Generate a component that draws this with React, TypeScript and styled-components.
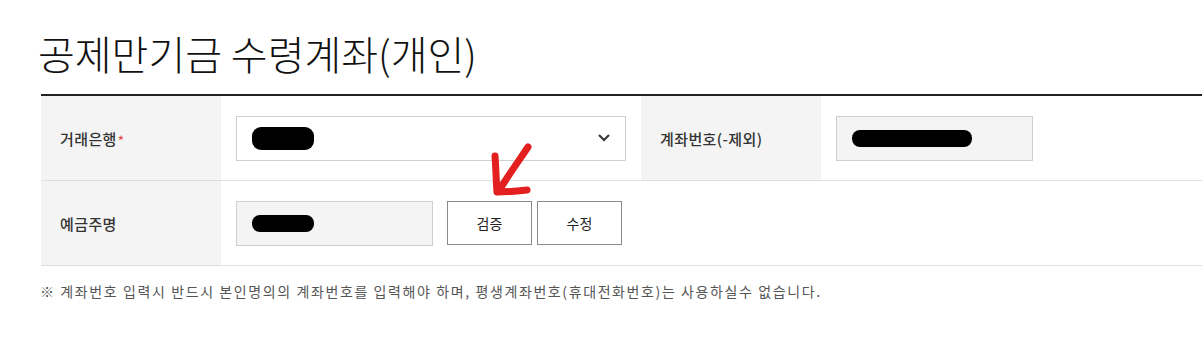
import React from "react";
import styled, { createGlobalStyle } from "styled-components";

const Global = createGlobalStyle`
  html, body { margin: 0; padding: 0; background: #fff; }
  body {
    font-family: "Noto Sans CJK KR", "Noto Sans", sans-serif;
    color: #333;
  }
  * { box-sizing: border-box; }
`;

const Page = styled.div`
  position: relative;
  width: 1202px;
  height: 339px;
  overflow: hidden;
  padding: 30px 0 0 41px;
`;

const Title = styled.h1`
  margin: 0 0 18px -3px;
  font-size: 40px;
  line-height: 46px;
  font-weight: 300;
  letter-spacing: 0;
  color: #111;
`;

const Table = styled.div`
  border-top: 2px solid #222;
  width: 1161px;
`;

const Row = styled.div<{ $cols: string }>`
  display: grid;
  grid-template-columns: ${(p) => p.$cols};
  height: 85px;
  border-bottom: 1px solid #dedede;
`;

const Label = styled.div`
  display: flex;
  align-items: center;
  padding-left: 19px;
  background: #f4f4f4;
  font-size: 15px;
  font-weight: 500;
  color: #333;
  letter-spacing: 0.4px;
`;

const Required = styled.span`
  color: #e3504a;
  font-size: 13px;
  margin-left: 1px;
  position: relative;
  top: 2px;
`;

const Value = styled.div`
  display: flex;
  align-items: center;
  padding: 0 15px;
  gap: 5px;
`;

const SelectBox = styled.div`
  position: relative;
  width: 390px;
  height: 45px;
  border: 1px solid #cfcfcf;
  background: #fff;
  display: flex;
  align-items: center;
  padding-left: 15px;
`;

const Chevron = styled.svg`
  position: absolute;
  right: 14px;
  top: 50%;
  margin-top: -5px;
`;

const ReadOnly = styled.div`
  width: 197px;
  height: 45px;
  border: 1px solid #cfcfcf;
  background: #f4f4f4;
  display: flex;
  align-items: center;
  padding-left: 15px;
`;

const Blot = styled.span<{ $w: number; $h: number; $r: number }>`
  display: inline-block;
  width: ${(p) => p.$w}px;
  height: ${(p) => p.$h}px;
  border-radius: ${(p) => p.$r}px;
  background: #000;
`;

const Button = styled.button`
  width: 85px;
  height: 44px;
  border: 1px solid #8a8a8a;
  background: #fff;
  font-family: inherit;
  font-size: 14px;
  color: #222;
  padding: 0;
  cursor: pointer;
  &:first-of-type { margin-left: 9px; }
`;

const Note = styled.p`
  margin: 15px 0 0 -1px;
  font-size: 14px;
  line-height: 20px;
  letter-spacing: 1.6px;
  color: #555;
`;

const Arrow = styled.svg`
  position: absolute;
  left: 486px;
  top: 140px;
`;

export default function App() {
  return (
    <>
      <Global />
      <Page>
        <Title>공제만기금 수령계좌(개인)</Title>
        <Table>
          <Row $cols="180px 420px 180px 1fr">
            <Label>
              거래은행<Required>*</Required>
            </Label>
            <Value>
              <SelectBox>
                <Blot $w={62} $h={23} $r={9} />
                <Chevron width="14" height="10" viewBox="0 0 14 10">
                  <polyline points="2,2 7,7 12,2" fill="none" stroke="#333" strokeWidth="2" />
                </Chevron>
              </SelectBox>
            </Value>
            <Label>계좌번호(-제외)</Label>
            <Value>
              <ReadOnly>
                <Blot $w={120} $h={17} $r={8} />
              </ReadOnly>
            </Value>
          </Row>
          <Row $cols="180px 1fr">
            <Label>예금주명</Label>
            <Value>
              <ReadOnly>
                <Blot $w={62} $h={17} $r={8} />
              </ReadOnly>
              <Button>검증</Button>
              <Button>수정</Button>
            </Value>
          </Row>
        </Table>
        <Note>
          ※ 계좌번호 입력시 반드시 본인명의의 계좌번호를 입력해야 하며, 평생계좌번호(휴대전화번호)는 사용하실수 없습니다.
        </Note>
        <Arrow width="50" height="60" viewBox="0 0 50 60">
          <path
            d="M42 7 C34 19, 22 36, 12 52 M9 16 C10 28, 10 40, 11 52 C20 52, 32 51, 41 50"
            fill="none"
            stroke="#e3201f"
            strokeWidth="7"
            strokeLinecap="round"
            strokeLinejoin="round"
          />
        </Arrow>
      </Page>
    </>
  );
}
